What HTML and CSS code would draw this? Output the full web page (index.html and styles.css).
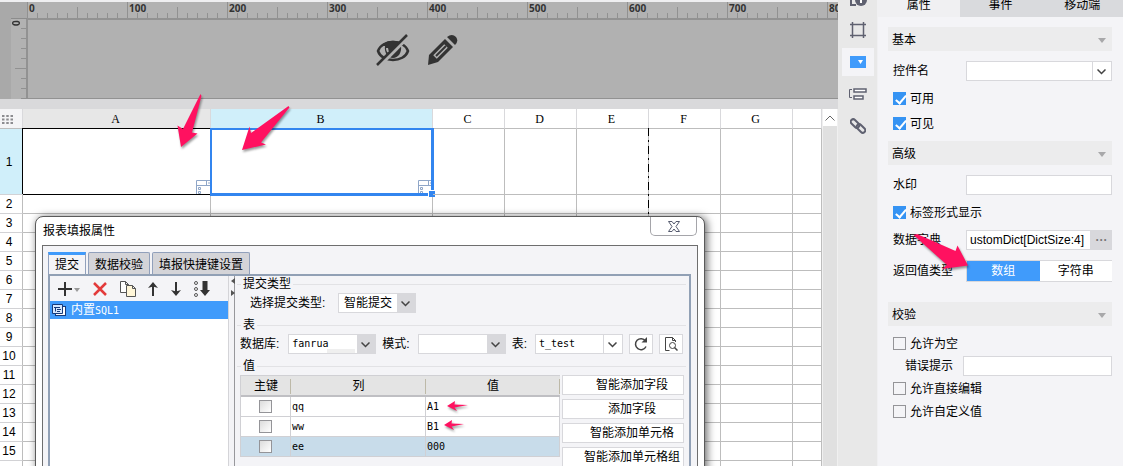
FILE: index.html
```html
<!DOCTYPE html>
<html lang="zh-CN">
<head>
<meta charset="UTF-8">
<meta name="viewport" content="width=device-width, initial-scale=1.0">
<title>报表填报属性</title>
<link rel="stylesheet" href="styles.css">
</head>
<body>
<div class="app">
    <main class="workspace">
        <div class="designer">
            <div class="ruler-corner"></div>
            <div class="ruler-top">
                <span>0</span><span>100</span><span>200</span><span>300</span><span>400</span><span>500</span><span>600</span><span>700</span><span>800</span>
            </div>
            <div class="ruler-left"><span>0</span></div>
            <div class="canvas">
                <svg width="34" height="32" viewBox="0 0 34 32">
                    <path d="M2 17C6 5 28 5 32 17C28 29 6 29 2 17Z" fill="none" stroke="#333" stroke-width="2.5"/>
                    <path d="M5 12C11 5 23 5 29 12L25 12C26 19 22 24 17 24S8 19 9 12Z" fill="#333"/>
                    <path d="M11 14q0 4 3 5" fill="none" stroke="#b1b1b1" stroke-width="2"/>
                    <path d="M1 34L34 1" stroke="#b1b1b1" stroke-width="4"/>
                    <path d="M1 31L31 1" stroke="#333" stroke-width="2.5"/>
                </svg>
                <svg width="34" height="32" viewBox="0 0 34 32">
                    <path d="M2 31L3 21L19 5L27 13L12 28Z" fill="#333"/>
                    <path d="M21 3Q26 -1 30 3Q33 7 29 11Z" fill="#333"/>
                    <path d="M9 23L20 12" stroke="#b1b1b1" stroke-width="5"/>
                    <path d="M10 22L20 12" stroke="#333" stroke-width="2"/>
                </svg>
            </div>
        </div>
        <div class="sheet">
            <div class="sheet-grid">
                <table class="cells">
                    <colgroup><col class="c-num"><col class="c-a"><col class="c-b"><col class="c-n"><col class="c-n"><col class="c-n"><col class="c-n"><col class="c-n"><col></colgroup>
                    <thead>
                        <tr>
                            <th class="corner"><svg width="11" height="9" viewBox="0 0 11 9"><path d="M0 1h11M0 4.500h11M0 8h11" stroke="#8c8c90" stroke-width="2" stroke-dasharray="2.500 1.750"/></svg></th>
                            <th class="in-range">A</th><th class="active">B</th><th>C</th><th>D</th><th>E</th><th>F</th><th>G</th><th></th>
                        </tr>
                    </thead>
                    <tbody>
                        <tr class="tall">
                            <th class="active">1</th>
                            <td class="cell-a"><svg class="widget" width="14" height="14" viewBox="0 0 14 14"><path d="M.5 14V.5H14M.5 5.500H14M10.500 .5v5M2.500 7.500h2v2h-2zM2.500 11.500h2v2h-2zM12 3h2" fill="none" stroke="#8fa6c8"/></svg></td>
                            <td class="cell-b"><svg class="widget" width="14" height="14" viewBox="0 0 14 14"><path d="M.5 14V.5H14M.5 5.500H14M10.500 .5v5M2.500 7.500h2v2h-2zM2.500 11.500h2v2h-2zM12 3h2" fill="none" stroke="#8fa6c8"/></svg><span class="selection"></span></td>
                            <td></td><td></td><td></td><td></td><td></td><td></td>
                        </tr>
                        <tr><th>2</th><td></td><td></td><td></td><td></td><td></td><td></td><td></td><td></td></tr>
                        <tr><th>3</th><td></td><td></td><td></td><td></td><td></td><td></td><td></td><td></td></tr>
                        <tr><th>4</th><td></td><td></td><td></td><td></td><td></td><td></td><td></td><td></td></tr>
                        <tr><th>5</th><td></td><td></td><td></td><td></td><td></td><td></td><td></td><td></td></tr>
                        <tr><th>6</th><td></td><td></td><td></td><td></td><td></td><td></td><td></td><td></td></tr>
                        <tr><th>7</th><td></td><td></td><td></td><td></td><td></td><td></td><td></td><td></td></tr>
                        <tr><th>8</th><td></td><td></td><td></td><td></td><td></td><td></td><td></td><td></td></tr>
                        <tr><th>9</th><td></td><td></td><td></td><td></td><td></td><td></td><td></td><td></td></tr>
                        <tr><th>10</th><td></td><td></td><td></td><td></td><td></td><td></td><td></td><td></td></tr>
                        <tr><th>11</th><td></td><td></td><td></td><td></td><td></td><td></td><td></td><td></td></tr>
                        <tr><th>12</th><td></td><td></td><td></td><td></td><td></td><td></td><td></td><td></td></tr>
                        <tr><th>13</th><td></td><td></td><td></td><td></td><td></td><td></td><td></td><td></td></tr>
                        <tr><th>14</th><td></td><td></td><td></td><td></td><td></td><td></td><td></td><td></td></tr>
                        <tr><th>15</th><td></td><td></td><td></td><td></td><td></td><td></td><td></td><td></td></tr>
                        <tr><th></th><td></td><td></td><td></td><td></td><td></td><td></td><td></td><td></td></tr>
                    </tbody>
                </table>
                <svg class="page-edge" width="1" height="340"><path d="M.5 0V340" stroke="#000" stroke-dasharray="8 4 2 4"/></svg>
            </div>
            <div class="scrollbar">
                <button class="scroll-up" aria-label="向上滚动"><svg width="10" height="6" viewBox="0 0 10 6"><path d="M.5 5.500L5 1L9.500 5.500" fill="none" stroke="#666"/></svg></button>
            </div>
        </div>

        <svg class="pointer pointer-a" width="30" height="62" viewBox="174 90 30 62"><path d="M200.500 94L201.500 96L192 132.500L197.500 133.500L181 147L177.500 125.500L183 129Z"/></svg>
        <svg class="pointer pointer-b" width="54" height="54" viewBox="238 102 54 54"><path d="M288.500 106L289.500 107.500L261 142.500L266 144.500L242 150L249.500 126.500L251 133Z"/></svg>

        <section class="dialog">
            <header class="dialog-title">
                <h1>报表填报属性</h1>
                <button class="dialog-close" aria-label="关闭"><svg width="12" height="11" viewBox="0 0 12 11"><path d="M.5 .5H4L6 3L8 .5h3.500L8 5.500L11.500 10.500H8L6 8L4 10.500H.5L4 5.500Z" fill="#fff" stroke="#555a6e"/></svg></button>
            </header>
            <div class="dialog-body">
                <nav class="tabs">
                    <button class="tab current">提交</button>
                    <button class="tab">数据校验</button>
                    <button class="tab">填报快捷键设置</button>
                </nav>
                <div class="pane">
                    <div class="submit-list">
                        <div class="tools">
                            <button aria-label="新增"><svg width="22" height="16" viewBox="0 0 22 16"><path d="M0 8h14M7 1v14" stroke="#333" stroke-width="2"/><path d="M16 7h6l-3 4z" fill="#999"/></svg></button>
                            <button aria-label="删除"><svg width="14" height="16" viewBox="0 0 14 16"><path d="M1 2L13 14M13 2L1 14" stroke="#e33b3b" stroke-width="2.500"/></svg></button>
                            <button aria-label="复制"><svg width="16" height="16" viewBox="0 0 16 16"><path d="M.5 .5h5l3 3V11.500H.5zM5.500 .5v3h3" fill="#fff" stroke="#555"/><path d="M6.500 4.500h6l3 3v8h-9zM12.500 4.500v3h3" fill="#fff6d8" stroke="#555"/></svg></button>
                            <button aria-label="上移"><svg width="10" height="16" viewBox="0 0 10 16"><path d="M5 15V4" stroke="#333" stroke-width="2"/><path d="M0 7L5 1L10 7L5 5.500z" fill="#333"/></svg></button>
                            <button aria-label="下移"><svg width="10" height="16" viewBox="0 0 10 16"><path d="M5 1v11" stroke="#333" stroke-width="2"/><path d="M0 9L5 15L10 9L5 10.500z" fill="#333"/></svg></button>
                            <button aria-label="排序"><svg width="16" height="16" viewBox="0 0 16 16"><g fill="none" stroke="#555"><circle cx="2" cy="2" r="1.500"/><circle cx="2" cy="8" r="1.500"/><circle cx="2" cy="14" r="1.500"/></g><path d="M8.500 0h5v9H16l-5 6l-5-6h2.500z" fill="#333"/></svg></button>
                        </div>
                        <ul class="list">
                            <li><svg width="14" height="12" viewBox="0 0 14 12"><path d="M3 2h11v10H3z" fill="#173a7a"/><path d="M4 3h9v8H4z" fill="#fff"/><path d="M.5 .5h10v9H.5z" fill="#d5e8ff" stroke="#173a7a"/><path d="M2 3.500h6M3.500 3v4.500M5 5.500h4M5 7.500h3" stroke="#173a7a"/></svg><span>内置<span class="mono">SQL1</span></span></li>
                        </ul>
                    </div>
                    <div class="splitter"><svg width="4" height="18" viewBox="0 0 4 18"><path d="M4 0v6L0 3zM0 12v6l4-3z" fill="#555"/></svg></div>
                    <div class="settings">
                        <h2>提交类型</h2>
                        <div class="line indent">
                            <label for="submitType">选择提交类型:</label>
                            <span class="combo gray type"><select id="submitType"><option>智能提交</option></select><svg width="9" height="6" viewBox="0 0 9 6"><path d="M.5 .5L4.500 4.500L8.500 .5" fill="none" stroke="#444" stroke-width="1.500"/></svg></span>
                        </div>
                        <h2>表</h2>
                        <div class="line">
                            <label for="database">数据库:</label>
                            <span class="combo gray masked"><select id="database" class="mono"><option>fanrua</option></select><svg width="9" height="6" viewBox="0 0 9 6"><path d="M.5 .5L4.500 4.500L8.500 .5" fill="none" stroke="#444" stroke-width="1.500"/></svg></span>
                            <label for="schema">模式:</label>
                            <span class="combo gray"><select id="schema" class="mono"><option></option></select><svg width="9" height="6" viewBox="0 0 9 6"><path d="M.5 .5L4.500 4.500L8.500 .5" fill="none" stroke="#444" stroke-width="1.500"/></svg></span>
                            <label for="tableName">表:</label>
                            <span class="combo"><select id="tableName" class="mono"><option>t_test</option></select><svg width="9" height="6" viewBox="0 0 9 6"><path d="M.5 .5L4.500 4.500L8.500 .5" fill="none" stroke="#444" stroke-width="1.500"/></svg></span>
                            <button class="icon-btn" aria-label="刷新"><svg width="14" height="14" viewBox="0 0 14 14"><path d="M11.500 4A5.500 5.500 0 1 0 12 9.500" fill="none" stroke="#444" stroke-width="1.500"/><path d="M13 0v5.500H7.500z" fill="#444"/></svg></button>
                            <button class="icon-btn" aria-label="预览"><svg width="13" height="14" viewBox="0 0 13 14"><path d="M4.500 13.500h-4V.5h7l3 3V5M7.500 .5v3h3" fill="none" stroke="#444"/><circle cx="7.500" cy="8.500" r="3" fill="none" stroke="#444"/><path d="M9.500 10.500L12.500 13.500" stroke="#444" stroke-width="1.500"/></svg></button>
                        </div>
                        <h2>值</h2>
                        <div class="values">
                            <table class="fields">
                                <colgroup><col class="f-key"><col class="f-col"><col></colgroup>
                                <thead><tr><th>主键</th><th>列</th><th>值</th></tr></thead>
                                <tbody>
                                    <tr><td class="key"><input type="checkbox" aria-label="主键 qq"></td><td>qq</td><td>A1<svg class="mark" width="24" height="12" viewBox="0 0 24 12"><path d="M1 6L9 1L8.500 4.500L22 5L8.500 7.500L11 11Z"/></svg></td></tr>
                                    <tr><td class="key"><input type="checkbox" aria-label="主键 ww"></td><td>ww</td><td>B1<svg class="mark near" width="24" height="12" viewBox="0 0 24 12"><path d="M1 6L9 1L8.500 4.500L21 5L8.500 7.500L11 11Z"/></svg></td></tr>
                                    <tr class="selected"><td class="key"><input type="checkbox" aria-label="主键 ee"></td><td>ee</td><td>000</td></tr>
                                </tbody>
                            </table>
                            <div class="actions">
                                <button>智能添加字段</button>
                                <button>添加字段</button>
                                <button>智能添加单元格</button>
                                <button>智能添加单元格组</button>
                            </div>
                        </div>
                    </div>
                </div>
            </div>
        </section>
    </main>

    <nav class="rail">
        <button class="cut" aria-label="单元格元素"><svg width="18" height="16" viewBox="0 0 18 16"><path d="M7 2H2v12h5M2 8h5" fill="none" stroke="#5f6170" stroke-width="2"/><circle cx="12" cy="9" r="6" fill="#5f6170"/><path d="M12 5v7" stroke="#fff" stroke-width="2"/></svg></button>
        <button aria-label="单元格属性"><svg width="16" height="16" viewBox="0 0 16 16"><path d="M2.500 0v16M13.500 0v16M0 2.500h16M0 13.500h16" stroke="#5f6170" stroke-width="1.500"/></svg></button>
        <button class="on" aria-label="控件设置"><svg width="16" height="12" viewBox="0 0 16 12"><path d="M0 0h16v12H0z" fill="#409bfb"/><path d="M8 4h5l-2.500 4z" fill="#fff"/></svg></button>
        <button aria-label="条件属性"><svg width="18" height="12" viewBox="0 0 18 12"><path d="M3 1.500H.5v8H3" fill="none" stroke="#5f6170"/><path d="M5 1h12v3H5zM5 8h9v3H5z" fill="#fff" stroke="#5f6170" stroke-width="1.500"/></svg></button>
        <button aria-label="超级链接"><svg width="16" height="16" viewBox="0 0 16 16"><g fill="none" stroke="#5f6170" stroke-width="2"><rect x="0" y="3" width="10" height="5" rx="2.500" transform="rotate(45 5 5.500)"/><rect x="6" y="8" width="10" height="5" rx="2.500" transform="rotate(45 11 10.500)"/></g></svg></button>
    </nav>

    <aside class="panel">
        <nav class="panel-tabs">
            <button class="current">属性</button>
            <button>事件</button>
            <button>移动端</button>
        </nav>
        <div class="panel-body">
            <h3>基本</h3>
            <section class="group">
                <div class="field">
                    <label for="widgetName">控件名</label>
                    <span class="combo wide"><select id="widgetName"><option></option></select><svg width="9" height="6" viewBox="0 0 9 6"><path d="M.5 .5L4.500 4.500L8.500 .5" fill="none" stroke="#444" stroke-width="1.500"/></svg></span>
                </div>
                <label class="check"><input type="checkbox" checked>可用</label>
                <label class="check"><input type="checkbox" checked>可见</label>
            </section>
            <h3>高级</h3>
            <section class="group">
                <div class="field">
                    <label for="watermark">水印</label>
                    <input type="text" id="watermark">
                </div>
                <label class="check"><input type="checkbox" checked>标签形式显示</label>
                <div class="field dict">
                    <label for="dict">数据字典</label>
                    <input type="text" id="dict" value="ustomDict[DictSize:4]">
                    <button class="more" aria-label="更多">···</button>
                </div>
                <div class="field return-type">
                    <span class="caption">返回值类型</span>
                    <div class="segment"><button class="on">数组</button><button>字符串</button></div>
                    <svg class="pointer pointer-c" width="62" height="42" viewBox="910 231 62 42"><path d="M913.500 236L917 235L955.500 252L957.500 246.500L968 266.500L942 270L947 266Z"/></svg>
                </div>
            </section>
            <h3>校验</h3>
            <section class="group compact">
                <label class="check"><input type="checkbox">允许为空</label>
                <div class="field hint">
                    <label for="errorHint">错误提示</label>
                    <input type="text" id="errorHint">
                </div>
                <label class="check"><input type="checkbox">允许直接编辑</label>
                <label class="check"><input type="checkbox">允许自定义值</label>
            </section>
        </div>
    </aside>
</div>
</body>
</html>
```

FILE: styles.css
```css
* {
    box-sizing: border-box;
}
body {
    margin: 0;
    font-family: "Liberation Sans", "Noto Sans CJK SC", sans-serif;
    font-size: 12px;
    line-height: 16px;
    color: #000;
    background-color: #f4f4f7;
}
button, input, select {
    font: inherit;
    color: inherit;
    margin: 0;
    padding: 0;
    border: none;
    border-radius: 0;
    background: none;
}
h1, h2, h3 {
    margin: 0;
    font-size: 12px;
    font-weight: normal;
}
svg {
    display: block;
    flex: none;
}
.app {
    display: flex;
    height: 100vh;
    overflow: hidden;
}

/* design area */
.workspace {
    position: relative;
    flex: 1;
    min-width: 0;
    display: flex;
    flex-direction: column;
    gap: 10px;
    background-color: #d9d9db;
    overflow: hidden;
}
.designer {
    display: grid;
    grid-template-columns: 27px 1fr;
    grid-template-rows: 17px 80px;
    overflow: hidden;
    border-top: 2px solid #efeff1;
    background-color: #a9a9a9;
}
.ruler-corner {
    margin-left: 11px;
    border-bottom: 1px solid #8c8c8c;
}
.ruler-top {
    display: flex;
    overflow: hidden;
    font: bold 10px/12px "Noto Sans", sans-serif;
    color: #333;
    border-bottom: 1px solid #929292;
    background-color: #b2b2b2;
    background-image: linear-gradient(to right, #919191 1px, transparent 1px), linear-gradient(to right, #919191 1px, transparent 1px), linear-gradient(to right, #919191 1px, transparent 1px);
    background-size: 100px 16px, 50px 11px, 10px 5px;
    background-position: left bottom;
    background-repeat: repeat-x;
}
.ruler-top span {
    flex: 0 0 100px;
    padding-left: 2px;
}
.ruler-left {
    margin-left: 11px;
    border-right: 1px solid #929292;
    font: bold 10px/10px "Noto Sans", sans-serif;
    color: #333;
    background-color: #b2b2b2;
    background-image: linear-gradient(#919191 1px, transparent 1px), linear-gradient(#919191 1px, transparent 1px);
    background-size: 11px 50px, 5px 10px;
    background-position: right -1px;
    background-repeat: repeat-y;
}
.ruler-left span {
    display: block;
    width: 10px;
    height: 7px;
    writing-mode: vertical-rl;
    transform: rotate(180deg);
}
.canvas {
    display: flex;
    justify-content: center;
    gap: 16px;
    padding: 14px 30px 0 0;
    background-color: #b1b1b1;
    border: 1px solid #929292;
    border-right: none;
}

/* spreadsheet */
.sheet {
    flex: 1;
    min-height: 0;
    display: flex;
    background-color: #fff;
}
.sheet-grid {
    position: relative;
    flex: 1;
    min-width: 0;
    overflow: hidden;
}
.cells {
    width: 100%;
    table-layout: fixed;
    border-spacing: 0;
}
.c-num {
    width: 23px;
}
.c-a {
    width: 188px;
}
.c-b {
    width: 222px;
}
.c-n {
    width: 72px;
}
.cells th, .cells td {
    height: 19px;
    padding: 0;
    border-right: 1px solid #bdbdbd;
    border-bottom: 1px solid #bdbdbd;
}
.cells th {
    font-weight: normal;
    line-height: 18px;
    padding-right: 4px;
    border-bottom-color: #d2d2d5;
}
.cells thead th {
    height: 20px;
    padding: 2px 2px 0 0;
    line-height: 17px;
    font-family: "Liberation Serif", serif;
    border-right-color: #d9d9dc;
    border-bottom-color: #bdbdbd;
}
.cells thead .corner {
    padding-left: 2px;
    background-color: #f4f4f6;
}
.cells .in-range {
    background-color: #e7e7e7;
}
.cells .active {
    background-color: #d0effa;
}
.cells .tall th, .cells .tall td {
    position: relative;
    height: 66px;
}
.cells .cell-a {
    border-color: #000;
    box-shadow: -1px -1px 0 #000;
}
.selection {
    position: absolute;
    inset: -1px -2px -2px -1px;
    border: 2px solid #3285ef;
    border-right-width: 3px;
    border-bottom-width: 3px;
}
.selection::after {
    content: "";
    position: absolute;
    right: -4px;
    bottom: -4px;
    width: 6px;
    height: 6px;
    background-color: #3285ef;
    border-top: 1px solid #fff;
    border-left: 1px solid #fff;
}
.widget {
    position: absolute;
    right: 0;
    bottom: 0;
}
.page-edge {
    position: absolute;
    top: 19px;
    left: 648px;
}
.scrollbar {
    width: 16px;
    border-left: 1px solid #f0f0f0;
    border-right: 1px solid #f0f0f0;
    background-color: #e0e0e0;
}
.scroll-up {
    display: flex;
    width: 100%;
    height: 17px;
    align-items: center;
    justify-content: center;
    background-color: #fff;
}

/* pink callout arrows */
.pointer, .mark {
    position: absolute;
    fill: #ff1160;
    filter: drop-shadow(1px 2px 1px rgba(0, 0, 0, 0.4));
    pointer-events: none;
}
.pointer-a {
    left: 174px;
    top: 90px;
}
.pointer-b {
    left: 238px;
    top: 102px;
}
.pointer-c {
    left: 17px;
    top: -30px;
}
.mark {
    left: 20px;
    top: 3px;
}
.mark.near {
    left: 17px;
    top: 2px;
}

/* dialog window */
.dialog {
    position: absolute;
    top: 216px;
    left: 35px;
    right: 133px;
    bottom: -10px;
    display: flex;
    flex-direction: column;
    padding: 0 7px;
    background-color: #fff;
    border: 1px solid #5a5a5a;
    border-radius: 8px 8px 0 0;
    box-shadow: 2px 1px 9px rgba(0, 0, 0, 0.6);
}
.dialog-title {
    display: flex;
    justify-content: space-between;
    align-items: flex-start;
    height: 28px;
}
.dialog-title h1 {
    line-height: 28px;
}
.dialog-close {
    display: flex;
    align-items: center;
    justify-content: center;
    width: 47px;
    height: 19px;
    border: 1px solid #a5a5aa;
    border-top: none;
    border-radius: 0 0 5px 5px;
}
.dialog-body {
    flex: 1;
    min-height: 0;
    display: flex;
    flex-direction: column;
    padding: 6px 6px 0 5px;
    border: 1px solid #6e6e6e;
    border-bottom: none;
    background-color: #f4f4f7;
    margin: 0 -1px;
}
.tabs {
    display: flex;
    gap: 2px;
    height: 22px;
}
.tab {
    padding: 2px 6px 0;
    border: 1px solid #91a0bb;
    border-bottom: none;
    border-radius: 2px 2px 0 0;
    background-color: #d4d4d8;
}
.tab.current {
    padding-top: 0;
    border-top: 3px solid #409bfb;
    border-radius: 0;
    background-color: #f4f4f7;
}
.pane {
    flex: 1;
    min-height: 0;
    display: flex;
    border: 2px solid #91a0b5;
    border-bottom: none;
}
.submit-list {
    flex: 0 0 178px;
    display: flex;
    flex-direction: column;
}
.tools {
    display: flex;
    align-items: center;
    justify-content: space-between;
    height: 25px;
    padding: 0 18px 0 8px;
}
.list {
    flex: 1;
    margin: 0;
    padding: 0;
    list-style: none;
    background-color: #fff;
}
.list li {
    display: flex;
    align-items: center;
    gap: 5px;
    height: 18px;
    padding-left: 2px;
    color: #fff;
    background-color: #409bfb;
}
.splitter {
    width: 7px;
    padding: 2px 0 0 2px;
    border-left: 1px solid #d4d4d8;
    border-right: 1px solid #98989c;
}
.settings {
    flex: 1;
    min-width: 0;
    padding: 0 3px 0 2px;
}
.settings h2 {
    display: flex;
    align-items: center;
    gap: 2px;
    line-height: 16px;
}
.settings h2::before, .settings h2::after {
    content: "";
    width: 4px;
    height: 1px;
    background-color: #e2e2e5;
}
.settings h2::after {
    flex: 1;
}
.line {
    display: flex;
    align-items: center;
    height: 20px;
    padding: 0 3px;
    margin: 1px 0 4px;
}
.line.indent {
    padding-left: 13px;
}
.line label {
    width: 43px;
    margin-right: 8px;
    white-space: nowrap;
}
.line.indent label {
    width: 80px;
}
.line .combo + label {
    width: auto;
    margin-left: 6px;
}
.combo {
    position: relative;
    display: flex;
    flex: 0 0 88px;
    height: 20px;
    border: 1px solid #d8d8dc;
    background: linear-gradient(#d8d8dc, #d8d8dc) right 18px top / 1px 100% no-repeat #fff;
}
.combo.type {
    flex-basis: 78px;
}
.combo.gray {
    background-size: 18px 100%;
    background-position: right top;
}
.combo select {
    appearance: none;
    flex: 1;
    min-width: 0;
    padding: 0 0 0 5px;
    outline: none;
}
.combo .mono {
    padding-left: 3px;
}
.combo svg {
    position: absolute;
    right: 5px;
    top: 7px;
    pointer-events: none;
}
.combo.masked::after {
    content: "";
    position: absolute;
    left: 38px;
    bottom: 0;
    width: 28px;
    height: 4px;
    background-color: #efefef;
}
.mono, .fields td {
    font-family: "DejaVu Sans Mono", monospace;
    font-size: 10px;
}
.icon-btn {
    display: flex;
    align-items: center;
    justify-content: center;
    flex: 0 0 24px;
    height: 20px;
    margin-left: 6px;
    border: 1px solid #d8d8dc;
    background-color: #fff;
}
.values {
    display: flex;
    gap: 2px;
    padding: 1px 2px 0 3px;
}
.fields {
    flex: 1;
    align-self: flex-start;
    table-layout: fixed;
    border-spacing: 0;
    border-left: 1px solid #d0d0d4;
}
.f-key {
    width: 50px;
}
.f-col {
    width: 135px;
}
.fields th {
    height: 22px;
    padding: 0;
    font-weight: normal;
    background: linear-gradient(#bdb9a8, #bdb9a8) right 3px / 1px 15px no-repeat #e4e4e4;
    border-top: 1px solid #d0d0d4;
    border-bottom: 2px solid #bfbfc3;
}
.fields td {
    position: relative;
    height: 20px;
    padding: 0 1px;
    line-height: 18px;
    background-color: #fff;
    border-right: 1px solid #d0d0d4;
    border-bottom: 1px solid #d0d0d4;
}
.fields .key {
    text-align: center;
}
.fields .selected td {
    background-color: #c8dcea;
}
.actions {
    flex: 0 0 122px;
    display: flex;
    flex-direction: column;
    gap: 4px;
}
.actions button {
    height: 20px;
    padding-left: 18px;
    white-space: nowrap;
    border: 1px solid #d8d8dc;
    background-color: #fff;
}

input[type="checkbox"] {
    position: relative;
    display: block;
    flex: none;
    width: 13px;
    height: 13px;
    appearance: none;
    border: 1px solid #949498;
}
.fields input[type="checkbox"] {
    margin: 0 auto;
    background: linear-gradient(135deg, #dcdcdc, #fff);
}
input[type="checkbox"]:checked {
    border-color: #3593f3;
    background-color: #3593f3;
}
input[type="checkbox"]:checked::after {
    content: "";
    position: absolute;
    left: 4px;
    top: 0;
    width: 4px;
    height: 9px;
    border: solid #fff;
    border-width: 0 2px 2px 0;
    transform: rotate(40deg);
}

/* icon rail */
.rail {
    flex: 0 0 40px;
    display: flex;
    flex-direction: column;
    align-items: center;
    gap: 4px;
    border-right: 1px solid #f0f0f2;
    background-color: #e8e8e8;
}
.rail button {
    display: flex;
    align-items: center;
    justify-content: center;
    width: 32px;
    height: 28px;
}
.rail .cut {
    height: 12px;
    align-items: flex-end;
    padding-bottom: 5px;
}
.rail .on {
    background-color: #f4f4f7;
}

/* property panel */
.panel {
    flex: 0 0 245px;
    min-width: 0;
    background-color: #f4f4f7;
}
.panel-tabs {
    display: flex;
}
.panel-tabs button {
    flex: 1;
    height: 17px;
    padding-bottom: 6px;
    line-height: 11px;
    background-color: #d9dadd;
}
.panel-tabs .current {
    background-color: #f0f0f2;
}
.panel-body {
    padding: 10px 11px 0 10px;
}
.panel h3 {
    display: flex;
    align-items: center;
    justify-content: space-between;
    height: 24px;
    padding: 2px 6px 0 4px;
    background-color: #ececed;
}
.panel h3::after {
    content: "";
    border: 4px solid transparent;
    border-top: 5px solid #a8a8aa;
    border-bottom: none;
}
.group {
    padding: 10px 0 5px 5px;
}
.field {
    position: relative;
    display: flex;
    align-items: center;
    height: 20px;
    margin-bottom: 5px;
}
.field label, .caption {
    flex: 0 0 73px;
}
.field input {
    flex: 1;
    min-width: 0;
    height: 20px;
    padding: 0 3px;
    border: 1px solid #d8d8dc;
    background-color: #fff;
}
.combo.wide {
    flex: 1;
}
.check {
    display: flex;
    align-items: center;
    gap: 4px;
    height: 25px;
}
.field.dict {
    margin: 5px 0 10px;
}
.more {
    width: 21px;
    height: 20px;
    font-weight: bold;
    color: #777;
    background-color: #d8d8dc;
}
.field.return-type {
    height: 22px;
    margin-bottom: 15px;
}
.segment {
    flex: 1;
    display: flex;
    height: 22px;
    border: 1px solid #d8d8dc;
    border-width: 1px 0 1px 1px;
    background-color: #fff;
}
.segment button {
    flex: 1;
}
.segment .on {
    color: #fff;
    background-color: #409bfb;
}
.compact {
    padding-top: 6px;
}
.compact .check {
    height: 23px;
}
.field.hint {
    margin: 1px 0;
    padding-left: 12px;
}
.field.hint label {
    flex-basis: 58px;
}
```
